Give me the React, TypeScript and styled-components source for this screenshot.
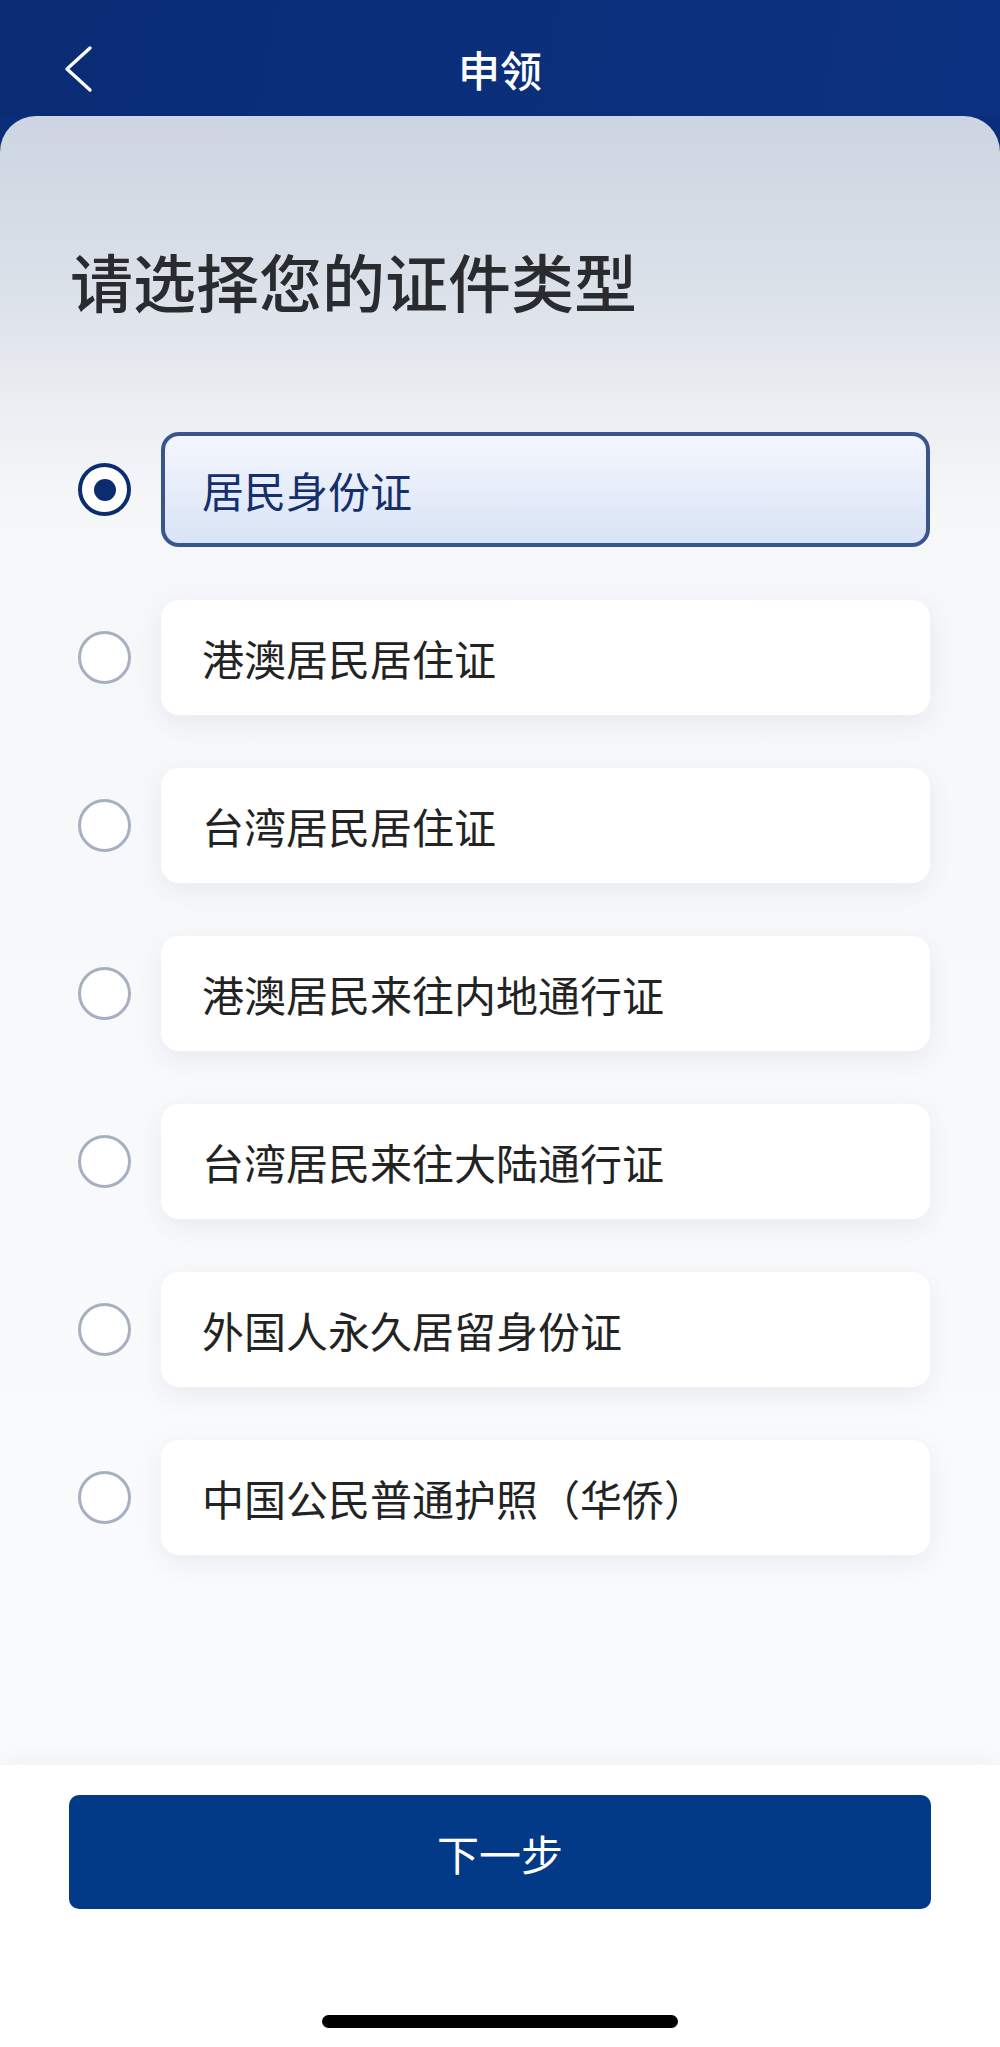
import React, { useState } from "react";
import styled, { createGlobalStyle, css } from "styled-components";

const GlobalStyle = createGlobalStyle`
  * {
    box-sizing: border-box;
  }

  body {
    margin: 0;
    background: #0a2e79;
    font-family: "Noto Sans CJK SC", "Noto Sans", sans-serif;
  }
`;

const OPTIONS = [
  "居民身份证",
  "港澳居民居住证",
  "台湾居民居住证",
  "港澳居民来往内地通行证",
  "台湾居民来往大陆通行证",
  "外国人永久居留身份证",
  "中国公民普通护照（华侨）",
];

const BackIcon = () => (
  <svg width="30" height="48" viewBox="0 0 30 48" fill="none">
    <polyline
      points="26,3 3,24 26,45"
      stroke="#ffffff"
      strokeWidth="3.4"
      strokeLinecap="round"
      strokeLinejoin="round"
    />
  </svg>
);

export default function App() {
  const [selected, setSelected] = useState(0);

  return (
    <Page>
      <GlobalStyle />
      <Header>
        <BackButton aria-label="返回">
          <BackIcon />
        </BackButton>
        <Title>申领</Title>
        <span />
      </Header>

      <Card>
        <Heading>请选择您的证件类型</Heading>
        <OptionList>
          {OPTIONS.map((label, i) => (
            <OptionRow key={label} onClick={() => setSelected(i)}>
              <Radio $checked={selected === i} />
              <OptionBox $checked={selected === i}>{label}</OptionBox>
            </OptionRow>
          ))}
        </OptionList>
      </Card>

      <Footer>
        <NextButton>下一步</NextButton>
        <HomeIndicator />
      </Footer>
    </Page>
  );
}

const Page = styled.div`
  width: 1000px;
  min-height: 2047px;
  display: flex;
  flex-direction: column;
  background: #0a2e79;
`;

const Header = styled.header`
  height: 116px;
  padding-top: 22px;
  display: grid;
  grid-template-columns: 1fr auto 1fr;
  align-items: center;
  background: linear-gradient(100deg, #0a2c75 0%, #0c3180 100%);
`;

const BackButton = styled.button`
  justify-self: start;
  margin-left: 64px;
  padding: 0;
  border: none;
  background: none;
  display: flex;
`;

const Title = styled.h1`
  margin: 0;
  font-size: 42px;
  font-weight: 500;
  line-height: 1;
  color: #ffffff;
`;

const Card = styled.main`
  flex: 1;
  border-radius: 36px 36px 0 0;
  padding: 127px 70px 0 78px;
  background: linear-gradient(
    180deg,
    #ccd5e1 0px,
    #dbe1e9 170px,
    #ebeef2 290px,
    #f6f7f9 400px,
    #fafbfc 100%
  );
`;

const Heading = styled.h2`
  margin: 0 0 115px -8px;
  font-size: 63px;
  line-height: 74px;
  font-weight: 500;
  color: #2a2b2e;
`;

const OptionList = styled.div`
  display: flex;
  flex-direction: column;
  gap: 53px;
`;

const OptionRow = styled.div`
  display: flex;
  align-items: center;
  gap: 30px;
  cursor: pointer;
`;

const Radio = styled.span<{ $checked: boolean }>`
  flex: none;
  width: 53px;
  height: 53px;
  border-radius: 50%;
  display: flex;
  align-items: center;
  justify-content: center;
  background: #ffffff;
  border: 3.5px solid #a7b0c1;

  ${(p) =>
    p.$checked &&
    css`
      border: 4px solid #0d2c6f;

      &::after {
        content: "";
        width: 22px;
        height: 22px;
        border-radius: 50%;
        background: #0d2c6f;
      }
    `}
`;

const OptionBox = styled.div<{ $checked: boolean }>`
  flex: 1;
  height: 115px;
  padding-left: 37px;
  display: flex;
  align-items: center;
  border-radius: 18px;
  font-size: 42px;
  color: #232323;
  background: #ffffff;
  border: 4px solid transparent;
  box-shadow: 0 8px 26px rgba(40, 60, 100, 0.08);

  ${(p) =>
    p.$checked &&
    css`
      color: #142f6b;
      border-color: #3a5490;
      background: linear-gradient(180deg, #f3f6fd 0%, #dae4f6 100%);
      box-shadow: none;
    `}
`;

const Footer = styled.footer`
  height: 282px;
  padding: 30px 69px 0;
  display: flex;
  flex-direction: column;
  align-items: center;
  background: #ffffff;
  box-shadow: 0 -10px 22px rgba(0, 0, 0, 0.035);
`;

const NextButton = styled.button`
  width: 100%;
  height: 114px;
  border: none;
  border-radius: 10px;
  background: #033a87;
  color: #ffffff;
  font-family: "Noto Sans CJK SC", sans-serif;
  font-size: 42px;
  font-weight: 400;
`;

const HomeIndicator = styled.div`
  width: 356px;
  height: 13px;
  margin-top: 106px;
  border-radius: 7px;
  background: #000000;
`;
